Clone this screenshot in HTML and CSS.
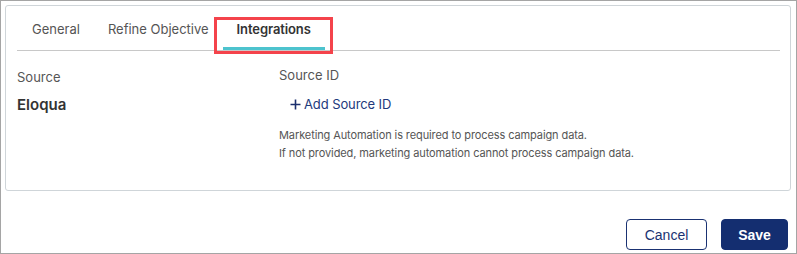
FILE: index.html
```html
<!DOCTYPE html>
<html lang="en">
<head>
  <meta charset="UTF-8" />
  <meta name="viewport" content="width=device-width, initial-scale=1.0" />
  <title>Integrations</title>
  <link rel="stylesheet" href="styles.css">
</head>
<body>
  <div class="frame">
    <div class="card">
      <div class="tabs">
        <div class="tab">General</div>
        <div class="tab">Refine Objective</div>
        <div class="tab active">Integrations<span class="highlight"></span></div>
      </div>

      <div class="fields">
        <div class="col">
          <div class="label">Source</div>
          <div class="value">Eloqua</div>
        </div>
        <div class="col col-id">
          <div class="label">Source ID</div>
          <a class="add-link" href="#">
            <svg width="11" height="11" viewBox="0 0 11 11"><path d="M5.5 0.5v10M0.5 5.5h10" stroke="currentColor" stroke-width="1.6" fill="none"/></svg>
            Add Source ID
          </a>
          <p class="help">
            Marketing Automation is required to process campaign data.<br>
            If not provided, marketing automation cannot process campaign data.
          </p>
        </div>
      </div>
    </div>

    <div class="actions">
      <button class="btn btn-outline">Cancel</button>
      <button class="btn btn-primary">Save</button>
    </div>
  </div>
</body>
</html>
```

FILE: styles.css
```css
* {
  box-sizing: border-box;
}
body {
  margin: 0;
  padding: 0;
  background: #fff;
  font-family: Inter, 'Noto Sans', sans-serif;
  color: #555;
}
.frame {
  height: 254px;
  border: 1px solid #a5a5a5;
  padding: 4px 5px 0 4px;
}
.card {
  height: 186px;
  border: 1px solid #cfd5d9;
  border-radius: 3px;
  padding: 0 10px 0 11px;
}
.tabs {
  display: flex;
  border-bottom: 1px solid #c8c8c8;
  padding-left: 1px;
}
.tab {
  position: relative;
  padding: 14px 14px 9px;
  font-size: 13px;
  line-height: 18px;
  color: #555;
  border-bottom: 3px solid transparent;
}
.tab.active {
  color: #333;
  font-weight: 600;
  letter-spacing: -0.1px;
  border-bottom-color: #4dc3ce;
}
.highlight {
  position: absolute;
  top: 11px;
  left: -9px;
  right: -8px;
  bottom: -7px;
  border: 3px solid #f4434b;
}
.fields {
  display: grid;
  grid-template-columns: 262px 1fr;
  padding-top: 17px;
}
.label {
  font-size: 13px;
  line-height: 18px;
  color: #555;
}
.col-id .label {
  margin-top: -2px;
}
.value {
  margin-top: 9px;
  font-size: 15px;
  line-height: 20px;
  font-weight: 600;
  color: #333;
}
.add-link {
  display: flex;
  align-items: center;
  gap: 3px;
  margin-top: 11px;
  padding-left: 11px;
  font-size: 13px;
  line-height: 18px;
  letter-spacing: -0.1px;
  color: #22397c;
  text-decoration: none;
}
.add-link svg {
  color: #1b2f6e;
}
.help {
  margin: 13px 0 0;
  font-size: 11px;
  line-height: 18px;
  letter-spacing: -0.1px;
  color: #555;
}
.actions {
  display: flex;
  justify-content: flex-end;
  gap: 14px;
  margin-top: 28px;
  padding-right: 3px;
}
.btn {
  height: 31px;
  border-radius: 4px;
  font-family: 'Liberation Sans', Arial, sans-serif;
  font-size: 14px;
  cursor: pointer;
}
.btn-outline {
  width: 81px;
  background: #fff;
  border: 1px solid #1a3272;
  color: #1a3272;
}
.btn-primary {
  width: 67px;
  background: #142e70;
  border: 1px solid #142e70;
  color: #fff;
  font-weight: bold;
}
```
